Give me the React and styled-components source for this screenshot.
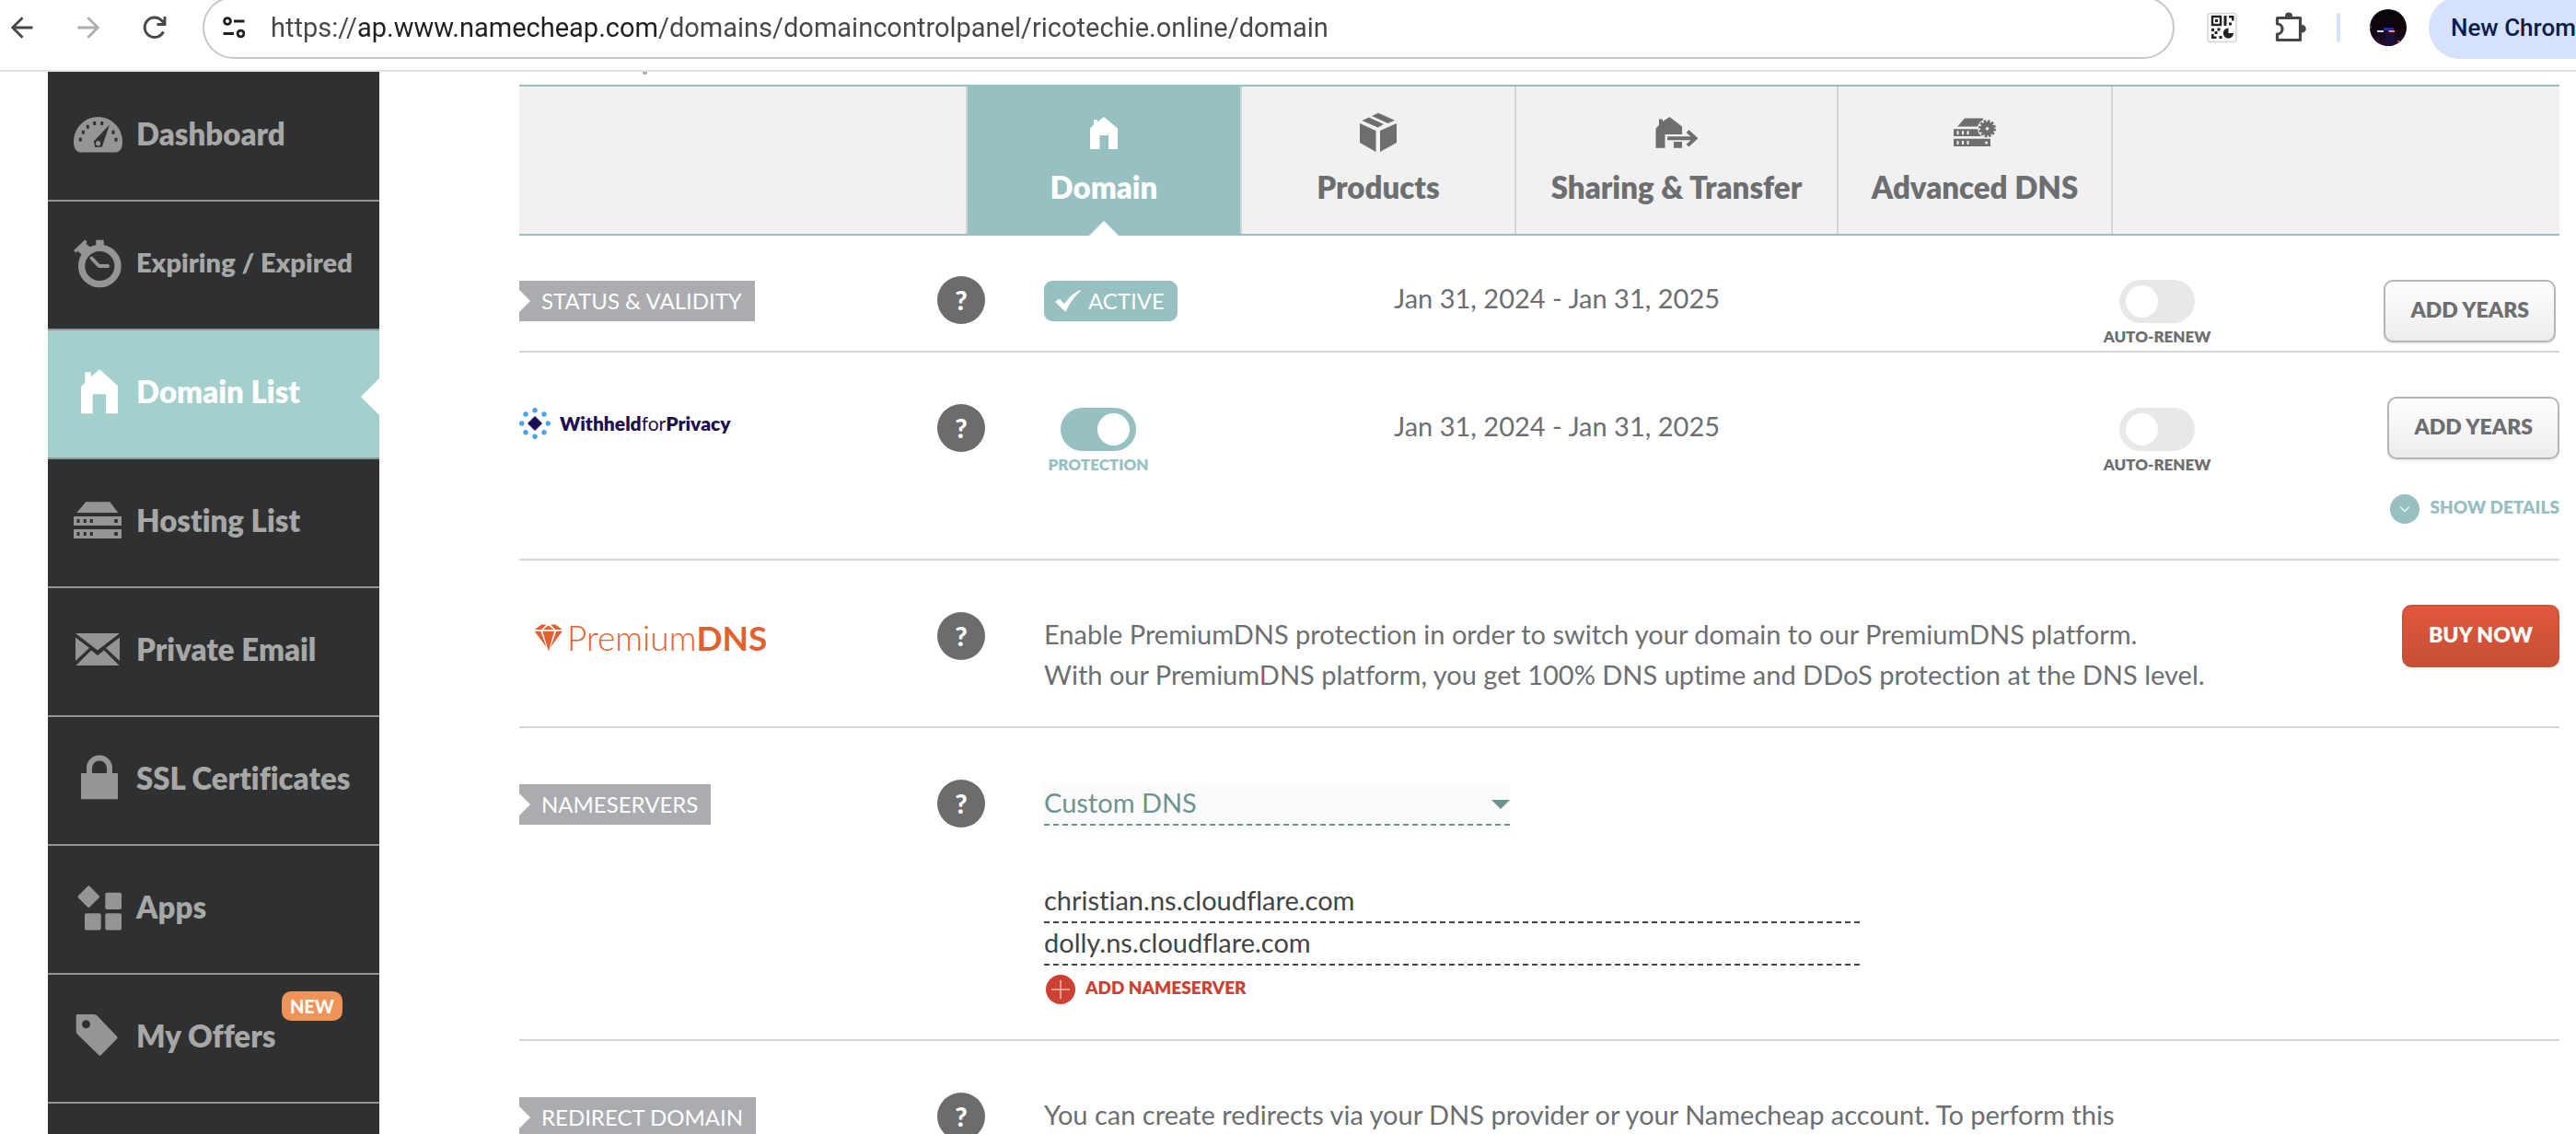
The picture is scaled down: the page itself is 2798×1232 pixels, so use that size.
import React, { useState } from 'react';
import styled, { createGlobalStyle, css } from 'styled-components';

const GlobalStyle = createGlobalStyle`
  *, *::before, *::after { box-sizing: border-box; }
  body {
    margin: 0;
    background: #fff;
    font-family: Lato, "Open Sans", sans-serif;
    font-variant-ligatures: none;
    color: #6d6e70;
  }
  button, input, select { font: inherit; color: inherit; margin: 0; font-variant-ligatures: none; }
  button { cursor: pointer; }
  ul { list-style: none; margin: 0; padding: 0; }
  svg { display: block; }
`;

const teal = '#97c0c0';
const grey = '#6d6e70';
const line = '#d5d5d5';

const Shell = styled.div`
  display: flex;
  flex-direction: column;
  height: 100vh;
  overflow: hidden;
`;

/* Browser toolbar */
const Toolbar = styled.header`
  display: flex;
  align-items: center;
  flex: none;
  height: 78px;
  padding-bottom: 16px;
  border-bottom: 2px solid #e1e3e1;
  overflow: hidden;
`;

const NavButtons = styled.nav`
  display: flex;
  gap: 24px;
  margin-right: 28px;
`;

const IconButton = styled.button`
  display: grid;
  place-items: center;
  width: 48px;
  height: 48px;
  padding: 0;
  border: 0;
  background: none;
  color: #474747;
  &:disabled { color: #aeaeae; }
`;

const AddressBar = styled.div`
  display: flex;
  align-items: center;
  flex: 1;
  gap: 28px;
  height: 68px;
  flex-shrink: 0;
  padding: 0 20px;
  border: 2px solid #c7c7c7;
  border-radius: 34px;
`;

const AddressInput = styled.input`
  flex: 1;
  min-width: 0;
  padding: 0;
  border: 0;
  outline: 0;
  font: 400 29px/40px Roboto, "Liberation Sans", sans-serif;
  color: #3a3a3a;
  background: linear-gradient(to right, #474747 94px, #1f1f1f 94px, #1f1f1f 420px, #474747 420px);
  -webkit-background-clip: text;
  background-clip: text;
  -webkit-text-fill-color: transparent;
`;

const Extensions = styled.div`
  display: flex;
  align-items: center;
  gap: 26px;
  padding: 0 18px 0 28px;
`;

const Divider = styled.span`
  width: 4px;
  height: 32px;
  border-radius: 2px;
  background: #d6e2fb;
`;

const PlainButton = styled.button`
  display: grid;
  place-items: center;
  width: ${p => p.$width}px;
  padding: 0;
  border: 0;
  background: none;
`;

const UpdateChip = styled.button`
  flex: 0 0 160px;
  height: 68px;
  padding: 0 0 0 24px;
  border: 0;
  border-radius: 34px 0 0 34px;
  background: #d6e2fb;
  color: #0a1d4a;
  font: 500 26px/40px Roboto, "Liberation Sans", sans-serif;
  text-align: left;
  white-space: nowrap;
`;

/* Page body */
const Page = styled.div`
  display: flex;
  flex: 1;
  min-height: 0;
  padding: 0 18px 0 52px;
`;

const Sidebar = styled.nav`
  flex: 0 0 360px;
  padding-top: 1px;
  background: #2e3032;
  overflow: hidden;
`;

const SideItem = styled.li`
  position: relative;
  border-bottom: 2px solid #949494;
  ${p => p.$active && css`
    background: #a3cfcd;
    &::after {
      content: '';
      position: absolute;
      right: 0;
      top: 52px;
      border: 20px solid transparent;
      border-left-width: 0;
      border-right-color: #fff;
    }
  `}
`;

const SideLink = styled.a`
  display: flex;
  align-items: center;
  gap: 14px;
  height: 138px;
  padding: 0 0 4px 28px;
  color: ${p => (p.$active ? '#fff' : '#a7a7a5')};
  font-size: ${p => (p.$compact ? 29 : 33)}px;
  font-weight: 800;
  line-height: 40px;
  text-decoration: none;
  white-space: nowrap;
  svg { color: ${p => (p.$active ? '#fff' : '#959595')}; }
  span { padding-bottom: 2px; }
`;

const NewBadge = styled.span`
  position: absolute;
  top: 18px;
  right: 40px;
  padding: 0 9px;
  border-radius: 10px;
  background: #f19257;
  color: #fff;
  font-size: 20px;
  font-weight: 900;
  line-height: 32px;
`;

const Main = styled.main`
  flex: 1;
  min-width: 0;
  margin-left: 152px;
`;

const TopGap = styled.div`
  height: 14px;
  padding-left: 134px;
  &::before {
    content: '';
    display: block;
    width: 5px;
    height: 3px;
    border-radius: 0 0 3px 3px;
    background: #a9aaab;
  }
`;

const TabBar = styled.nav`
  display: flex;
  justify-content: center;
  border: solid ${teal};
  border-width: 2px 0;
  background: #f1f1f1;
`;

const Tab = styled.a`
  position: relative;
  display: flex;
  flex-direction: column;
  align-items: center;
  gap: 16px;
  width: ${p => p.$width || 298}px;
  height: 160px;
  padding-top: 26px;
  border-right: 2px solid #d5d5d5;
  color: ${grey};
  font-size: 33px;
  font-weight: 800;
  line-height: 38px;
  text-decoration: none;
  white-space: nowrap;
  &:first-child {
    box-sizing: content-box;
    width: 296px;
    height: 134px;
    border-left: 2px solid #d5d5d5;
  }
  ${p => p.$active && css`
    background: ${teal};
    color: #fff;
    &::after {
      content: '';
      position: absolute;
      left: 50%;
      bottom: -2px;
      margin-left: -16px;
      border: 16px solid transparent;
      border-top-width: 0;
      border-bottom-color: #fff;
    }
  `}
`;

const Row = styled.section`
  display: grid;
  grid-template-columns: 454px 116px 1fr;
  align-items: start;
  padding: ${p => p.$top || 56}px 0 ${p => p.$bottom}px;
  border-bottom: 2px solid ${line};
`;

const LabelCell = styled.div`
  display: flex;
  align-items: center;
  height: ${p => p.$height || 54}px;
`;

const Flag = styled.h2`
  position: relative;
  margin: 0;
  padding: 0 14px 0 24px;
  background: #abacb0;
  color: #fff;
  font-size: 24px;
  font-weight: 400;
  line-height: 44px;
  &::before {
    content: '';
    position: absolute;
    left: 0;
    top: 10px;
    border: 12px solid transparent;
    border-right-width: 0;
    border-left-color: #fff;
  }
`;

const PrivacyLogo = styled.span`
  display: flex;
  align-items: center;
  gap: 10px;
  color: #1b0f52;
  font-size: 21px;
  font-weight: 400;
  line-height: 32px;
  b { font-weight: 800; }
`;

const PremiumLogo = styled.span`
  display: flex;
  align-items: center;
  gap: 4px;
  padding-left: 16px;
  color: #e3612f;
  font-size: 37px;
  font-weight: 300;
  line-height: 44px;
  b { font-weight: 700; }
`;

const Help = styled.button`
  width: 52px;
  height: 52px;
  padding: 0;
  border: 0;
  border-radius: 50%;
  background: #6b6c6e;
  color: #fff;
  font-size: 29px;
  font-weight: 900;
  line-height: 52px;
`;

const Content = styled.div`
  display: grid;
  grid-template-columns: ${p => (p.$dated ? '380px 1fr auto 378px' : '1fr auto')};
  align-items: start;
`;

const ActiveBadge = styled.span`
  display: inline-flex;
  align-items: center;
  gap: 8px;
  margin-top: 5px;
  padding: 0 14px 0 12px;
  border-radius: 9px;
  background: ${teal};
  color: #fff;
  font-size: 24px;
  line-height: 44px;
`;

const BodyText = styled.p`
  margin: 0;
  padding-top: 2px;
  font-size: 29px;
  line-height: 44px;
`;

const ToggleLabel = styled.label`
  display: inline-flex;
  flex-direction: column;
  align-items: center;
  gap: 3px;
  min-width: 118px;
  padding-top: 4px;
  color: ${p => (p.$accent ? teal : grey)};
  font-size: 17px;
  font-weight: 800;
  line-height: 24px;
  white-space: nowrap;
`;

const ToggleInput = styled.input`
  appearance: none;
  width: 82px;
  height: 47px;
  padding: 6px 7px;
  border-radius: 24px;
  background: #e6e8ea;
  &::before {
    content: '';
    display: block;
    width: 35px;
    height: 35px;
    border-radius: 50%;
    background: #fff;
  }
  &:checked { background: ${teal}; }
  &:checked::before { margin-left: auto; }
`;

const Actions = styled.div`
  display: flex;
  flex-direction: column;
  align-items: flex-end;
  gap: 38px;
  margin-top: ${p => (p.$inset ? 4 : -8)}px;
  margin-right: ${p => (p.$inset ? 4 : 0)}px;
`;

const Button = styled.button`
  height: 68px;
  padding: 0 27px 4px;
  border: 2px solid #b4b4b4;
  border-radius: 10px;
  background: linear-gradient(#fff, #ececec);
  box-shadow: 0 2px 1px #eee;
  color: ${grey};
  font-size: 23px;
  font-weight: 800;
  ${p => p.$primary && css`
    border-color: #d0523a #cd5138 #c64f36;
    background: linear-gradient(#e0583c, #c64f36);
    background-origin: border-box;
    box-shadow: none;
    color: #fff;
  `}
`;

const TextButton = styled.button`
  display: flex;
  align-items: center;
  gap: 11px;
  padding: 0;
  border: 0;
  background: none;
  color: ${p => p.$color};
  font-size: 19px;
  font-weight: 800;
  line-height: 32px;
  span { padding-bottom: 4px; line-height: 28px; }
`;

const SelectWrap = styled.div`
  position: relative;
  width: 506px;
  margin: 4px 0 60px;
  color: #6d9391;
  svg { position: absolute; right: 0; top: 18px; pointer-events: none; }
`;

const Select = styled.select`
  appearance: none;
  display: block;
  width: 100%;
  height: 46px;
  padding: 0 24px 4px 0;
  border: 0;
  border-bottom: 2px dashed #6d9391;
  border-radius: 0;
  background: #fbfbfb;
  font-size: 29px;
`;

const NameserverInput = styled.input`
  display: block;
  width: 886px;
  max-width: 100%;
  height: 46px;
  padding: 0 0 4px;
  border: 0;
  border-bottom: 2px dashed #444;
  background: none;
  color: #444;
  font-size: 29px;
`;

const AddRow = styled.div`
  padding: 10px 0 0 2px;
`;

const Svg = ({ w, h, children, ...rest }) => (
  <svg width={w} height={h} viewBox={`0 0 ${w} ${h}`} fill="currentColor" aria-hidden="true" {...rest}>
    {children}
  </svg>
);

const Dot = ({ x, y, w = 3, h = 4 }) => <rect x={x - w / 2} y={y - h / 2} width={w} height={h} fill="#2e3032" />;

const sideIcons = {
  dashboard: (
    <>
      <path d="M0 35C0 20 12 8 26.500 8S53 20 53 35c0 8-3 11.600-9 11.600H9C3 46.600 0 43 0 35Z" />
      <Dot x={7.300} y={32.700} /><Dot x={10.300} y={24.700} /><Dot x={15.300} y={18.700} /><Dot x={22.700} y={15} />
      <Dot x={30.700} y={15} /><Dot x={43} y={24.700} /><Dot x={46} y={32.700} />
      <path d="M39 16.500 30.800 40.500 23.400 41 21.800 34.500Z" fill="#2e3032" />
      <circle cx="26.600" cy="36.700" r="2.600" />
    </>
  ),
  stopwatch: (
    <>
      <circle cx="28.300" cy="30" r="19.700" fill="none" stroke="currentColor" strokeWidth="7.300" />
      <path d="M24.300 1.700h8.400V10h-8.400ZM12.300 1.500 14.500 3.800 13.300 5.600 18.500 10 9.500 18.500 4.600 13.800 2.800 15.500 0 13.200Z" />
      <path d="M19.500 21.500 27.600 30h9.600" fill="none" stroke="currentColor" strokeWidth="3.800" strokeLinecap="round" strokeLinejoin="round" />
    </>
  ),
  house: <path d="M8 21l4.300-4V5.300h6.400v5l9.600-8L48 20.300v30H35v-21H20.700v21H8Z" />,
  server: (
    <>
      <path d="M13.300 6.300h26l9 11.700h-45ZM0 22h52v10H0ZM0 36h52v10H0Z" />
      {[27, 41].map(y => [5, 12.300, 19.300].map(x => <Dot key={`${x}-${y}`} x={x} y={y} />))}
      <circle cx="46" cy="27" r="2.200" fill="#2e3032" />
      <circle cx="46" cy="41" r="2.200" fill="#2e3032" />
    </>
  ),
  mail: <path d="M2 9h48L26 27.500ZM2 13.500 17 25 2 39ZM50 13.500 35 25 50 39ZM2.500 44 19 27.500 26 33l7-5.500L49.500 44Z" />,
  lock: (
    <>
      <path d="M8 21h40v28.300H8Z" />
      <path d="M17 23v-7.500a11 11 0 0 1 22 0V23" fill="none" stroke="currentColor" strokeWidth="6" />
    </>
  ),
  apps: (
    <>
      <rect x="7.500" y="6.400" width="17.600" height="17.600" rx="1.500" transform="rotate(45 16.300 15.200)" />
      <rect x="34.300" y="10.700" width="17.700" height="18.300" rx="2" />
      <rect x="12" y="33.300" width="17.700" height="18.300" rx="2" />
      <rect x="34.300" y="33.300" width="17.700" height="18.300" rx="2" />
    </>
  ),
  tag: <path fillRule="evenodd" d="M4 3h18q2 0 3.500 1.500L47 27q1.200 1.200 0 2.500L30 47q-1.500 1.500-3 0L4 24.500Q2.700 23 2.700 21.500V4.500Q2.700 3 4 3ZM13.500 9.200a4.500 4.500 0 1 0 .01 0Z" />,
};

const tabIcons = {
  domain: <path d="M9 19.500l4-4V10h4v2.500L24 7l15 12.500V42H29V27h-9.500v15H9Z" />,
  products: (
    <>
      <path d="M4 14l17.500 8v23L4 35ZM26 22l18-8v21L26 45Z" />
      <path d="M6.500 11l7.500-3.500 16 7.500-6.500 3.500ZM17 6l7-3.300 18 8L34.500 14Z" />
    </>
  ),
  sharing: (
    <>
      <path d="M1.500 19.500l3.500-3.500V9.500h4v2.500l7.500-5L30 17.500V26H11.500v14.700h-10ZM21 34h9v6.700h-9Z" />
      <path d="M14 30.300h30M36 22.500l8.500 7.800-8.500 7.800" fill="none" stroke="currentColor" strokeWidth="4" />
    </>
  ),
  dns: (
    <>
      <path d="M13 8.500h20v9H5ZM1 20.300h32V28H1ZM1 30.700h40V39H1Z" />
      {[24.200, 35].map(y => [5.500, 11, 16.500].map(x => <rect key={`${x}-${y}`} x={x - 1} y={y - 2} width="2" height="4" fill="#f1f1f1" />))}
      <circle cx="36.500" cy="35" r="1.500" fill="#f1f1f1" />
      <circle cx="37.500" cy="19.700" r="10.500" fill="#f1f1f1" />
      <circle cx="37.500" cy="19.700" r="7.500" />
      <circle cx="37.500" cy="19.700" r="8" fill="none" stroke="currentColor" strokeWidth="3" strokeDasharray="2.600 1.600" />
      <circle cx="37.500" cy="19.700" r="1.800" fill="#f1f1f1" />
    </>
  ),
};

const sideItems = [
  { icon: 'dashboard', text: 'Dashboard' },
  { icon: 'stopwatch', text: 'Expiring / Expired', compact: true },
  { icon: 'house', text: 'Domain List', active: true },
  { icon: 'server', text: 'Hosting List' },
  { icon: 'mail', text: 'Private Email' },
  { icon: 'lock', text: 'SSL Certificates' },
  { icon: 'apps', text: 'Apps' },
  { icon: 'tag', text: 'My Offers', isNew: true },
];

const tabs = [
  { icon: 'domain', text: 'Domain', active: true },
  { icon: 'products', text: 'Products' },
  { icon: 'sharing', text: 'Sharing & Transfer', width: 350 },
  { icon: 'dns', text: 'Advanced DNS' },
];

const BrowserBar = () => {
  const [url, setUrl] = useState('https://ap.www.namecheap.com/domains/domaincontrolpanel/ricotechie.online/domain');
  return (
    <Toolbar>
      <NavButtons aria-label="History">
        <IconButton aria-label="Back">
          <Svg w={24} h={24}><path d="M23.500 12H2M12.500 1.200 1.700 12l10.800 10.800" fill="none" stroke="currentColor" strokeWidth="2.800" /></Svg>
        </IconButton>
        <IconButton aria-label="Forward" disabled>
          <Svg w={24} h={24}><path d="M.5 12H22M11.500 1.200 22.300 12 11.500 22.800" fill="none" stroke="currentColor" strokeWidth="2.800" /></Svg>
        </IconButton>
        <IconButton aria-label="Reload">
          <Svg w={26} h={26}><path d="M22.500 17.500A10.700 10.700 0 1 1 20.800 5.500L23.500 8.700M24 1v8.500h-8.500" fill="none" stroke="currentColor" strokeWidth="2.900" /></Svg>
        </IconButton>
      </NavButtons>
      <AddressBar>
        <Svg w={24} h={24} color="#1f1f1f">
          <g fill="none" stroke="currentColor" strokeWidth="2.800">
            <circle cx="5" cy="5" r="3.400" /><path d="M12 5h11.500M.5 18.500H12" /><circle cx="19.500" cy="18.500" r="3.400" />
          </g>
        </Svg>
        <AddressInput aria-label="Address" spellCheck={false} value={url} onChange={e => setUrl(e.target.value)} />
      </AddressBar>
      <Extensions>
        <PlainButton $width={48} aria-label="QR code extension">
          <Svg w={34} h={34} color="#222">
            <rect x="1" y="1.500" width="31" height="31" rx="3" fill="#fcfcfc" stroke="#d4d4d4" strokeWidth="1.500" />
            <rect x="6" y="5" width="9" height="9" fill="none" stroke="currentColor" strokeWidth="2.400" />
            <path d="M9 8h3v3H9ZM18.500 4h3v11h-3ZM24 4h5.500v5.500H27V6.500h-3ZM24 11.500h3v3h-3ZM5 18h3v3H5ZM11.500 17.500h3v3h-3ZM8.500 21h3v3h-3ZM5 24h2.500v2.500h3V29H5ZM13.500 26h3v3h-3Z" />
            <path d="M23.500 17.500v5.500H29a5.600 5.600 0 1 1-5.500-5.500Z" />
          </Svg>
        </PlainButton>
        <PlainButton $width={48} aria-label="Extensions">
          <Svg w={34} h={36} color="#474747">
            <path d="M3 7.500H27.500V31.500H2.500V25a5.500 5.500 0 0 0 0-11V8Z" fill="none" stroke="currentColor" strokeWidth="3.200" strokeLinejoin="round" />
            <path d="M11 7V5.500a4 4 0 0 1 8 0V7ZM28 15h1.500a4 4 0 0 1 0 8.500H28Z" />
          </Svg>
        </PlainButton>
        <Divider />
        <PlainButton $width={52} aria-label="Profile">
          <Svg w={40} h={40}>
            <clipPath id="face"><circle cx="20" cy="20" r="20" /></clipPath>
            <linearGradient id="night" x1="0" y1="0" x2="0" y2="1">
              <stop offset="0" stopColor="#06060b" /><stop offset=".6" stopColor="#14040f" /><stop offset="1" stopColor="#2a0c38" />
            </linearGradient>
            <g clipPath="url(#face)">
              <rect width="40" height="40" fill="url(#night)" />
              <path d="M15 20h11v3H15Z" fill="#2626b8" />
              <path d="M17 25h10v15H17Z" fill="#1c1038" />
              <path d="M8 23h7v2H8Z" fill="#b9d8ff" />
              <path d="M20.500 23H27v2h-6.500Z" fill="#ff8a62" />
              <path d="M0 18h1.500v3H0ZM30 34h3v2h-3Z" fill="#8a5640" />
            </g>
          </Svg>
        </PlainButton>
      </Extensions>
      <UpdateChip>New Chrom</UpdateChip>
    </Toolbar>
  );
};

const HelpButton = ({ topic }) => <Help aria-label={`Help: ${topic}`}>?</Help>;

const Toggle = ({ text, on = false }) => {
  const [checked, setChecked] = useState(on);
  return (
    <ToggleLabel $accent={on}>
      <ToggleInput type="checkbox" checked={checked} onChange={e => setChecked(e.target.checked)} />
      {text}
    </ToggleLabel>
  );
};

const PrivacyMark = () => (
  <Svg w={34} h={34}>
    <path d="M17 9.500 24.500 17 17 24.500 9.500 17Z" stroke="currentColor" strokeLinejoin="round" />
    {[[17, 2.700], [27, 7], [31.300, 17], [27, 26.700], [17, 31.300], [7, 26.700], [2.700, 17], [7, 7]].map(([x, y]) => (
      <circle key={`${x}-${y}`} cx={x} cy={y} r="2.700" fill="#4aa3f0" />
    ))}
  </Svg>
);

const DiamondMark = () => (
  <Svg w={32} h={30}>
    <path d="M8 .5h5.500L8 6H1ZM15.700 1.500 21.500 6H10ZM18 .5h5.500L30.500 6h-7ZM.5 7.800h6.700L13.500 25ZM9.300 7.800h12.800L15.800 29.500ZM24.200 7.800h6.800L18 25Z" />
  </Svg>
);

export default function App() {
  const [servers, setServers] = useState(['christian.ns.cloudflare.com', 'dolly.ns.cloudflare.com']);
  const change = (i, v) => setServers(servers.map((s, n) => (n === i ? v : s)));

  return (
    <Shell>
      <GlobalStyle />
      <BrowserBar />
      <Page>
        <Sidebar aria-label="Account">
          <ul>
            {sideItems.map(item => (
              <SideItem key={item.text} $active={item.active}>
                <SideLink href="#" $active={item.active} $compact={item.compact}>
                  <Svg w={54} h={54}>{sideIcons[item.icon]}</Svg>
                  <span>{item.text}</span>
                </SideLink>
                {item.isNew && <NewBadge>NEW</NewBadge>}
              </SideItem>
            ))}
          </ul>
        </Sidebar>
        <Main>
          <TopGap />
          <TabBar aria-label="Domain settings">
            {tabs.map(tab => (
              <Tab key={tab.text} href="#" $active={tab.active} $width={tab.width}>
                <Svg w={48} h={48}>{tabIcons[tab.icon]}</Svg>
                {tab.text}
              </Tab>
            ))}
          </TabBar>

          <Row $top={44} $bottom={3}>
            <LabelCell><Flag>STATUS &amp; VALIDITY</Flag></LabelCell>
            <HelpButton topic="status and validity" />
            <Content $dated>
              <div>
                <ActiveBadge>
                  <Svg w={28} h={24}><path d="M0 13l4.500-3.500 5.500 5.500C15 8 20 3 27 0l1 1C21 7 16 14 11.500 24Z" /></Svg>
                  ACTIVE
                </ActiveBadge>
              </div>
              <BodyText>Jan 31, 2024 - Jan 31, 2025</BodyText>
              <Toggle text="AUTO-RENEW" />
              <Actions $inset><Button>ADD YEARS</Button></Actions>
            </Content>
          </Row>

          <Row $bottom={38}>
            <LabelCell $height={42}>
              <PrivacyLogo><PrivacyMark /><span><b>Withheld</b>for<b>Privacy</b></span></PrivacyLogo>
            </LabelCell>
            <HelpButton topic="privacy protection" />
            <Content $dated>
              <div><Toggle text="PROTECTION" on /></div>
              <BodyText>Jan 31, 2024 - Jan 31, 2025</BodyText>
              <Toggle text="AUTO-RENEW" />
              <Actions>
                <Button>ADD YEARS</Button>
                <TextButton $color={teal}>
                  <Svg w={32} h={32}>
                    <circle cx="16" cy="16" r="16" />
                    <path d="M11 13.500l5 5 5-5" fill="none" stroke="#e4f1f0" strokeWidth="1.600" />
                  </Svg>
                  <span>SHOW DETAILS</span>
                </TextButton>
              </Actions>
            </Content>
          </Row>

          <Row $bottom={34}>
            <LabelCell $height={56}>
              <PremiumLogo><DiamondMark /><span>Premium<b>DNS</b></span></PremiumLogo>
            </LabelCell>
            <HelpButton topic="PremiumDNS" />
            <Content>
              <BodyText>
                Enable PremiumDNS protection in order to switch your domain to our PremiumDNS platform.
                <br />
                With our PremiumDNS platform, you get 100% DNS uptime and DDoS protection at the DNS level.
              </BodyText>
              <Actions><Button $primary>BUY NOW</Button></Actions>
            </Content>
          </Row>

          <Row $bottom={38}>
            <LabelCell><Flag>NAMESERVERS</Flag></LabelCell>
            <HelpButton topic="nameservers" />
            <div>
              <SelectWrap>
                <Select aria-label="Nameserver type" defaultValue="Custom DNS">
                  <option>Custom DNS</option>
                </Select>
                <Svg w={20} h={10}><path d="M0 0h20L10 10Z" /></Svg>
              </SelectWrap>
              {servers.map((server, i) => (
                <NameserverInput key={i} aria-label={`Nameserver ${i + 1}`} spellCheck={false} value={server} onChange={e => change(i, e.target.value)} />
              ))}
              <AddRow>
                <TextButton $color="#cc4132" onClick={() => setServers([...servers, ''])}>
                  <Svg w={32} h={32}>
                    <circle cx="16" cy="16" r="16" />
                    <path d="M16 6v20M6 16h20" stroke="#f0b7b0" strokeWidth="1.600" />
                  </Svg>
                  <span>ADD NAMESERVER</span>
                </TextButton>
              </AddRow>
            </div>
          </Row>

          <Row $bottom={38}>
            <LabelCell><Flag>REDIRECT DOMAIN</Flag></LabelCell>
            <HelpButton topic="redirect domain" />
            <BodyText>You can create redirects via your DNS provider or your Namecheap account. To perform this</BodyText>
          </Row>
        </Main>
      </Page>
    </Shell>
  );
}
